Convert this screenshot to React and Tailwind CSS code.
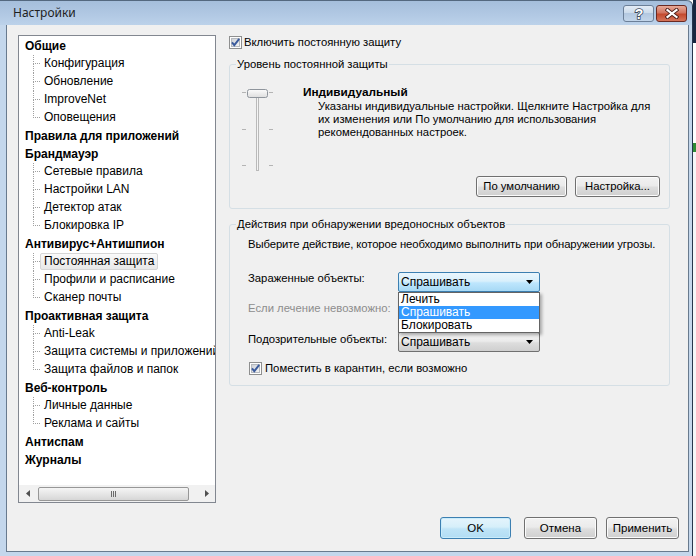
import React from "react";

const TREE = [
  { label: "Общие", children: ["Конфигурация", "Обновление", "ImproveNet", "Оповещения"] },
  { label: "Правила для приложений" },
  { label: "Брандмауэр", children: ["Сетевые правила", "Настройки LAN", "Детектор атак", "Блокировка IP"] },
  { label: "Антивирус+Антишпион", children: ["Постоянная защита", "Профили и расписание", "Сканер почты"] },
  { label: "Проактивная защита", children: ["Anti-Leak", "Защита системы и приложений", "Защита файлов и папок"] },
  { label: "Веб-контроль", children: ["Личные данные", "Реклама и сайты"] },
  { label: "Антиспам" },
  { label: "Журналы" },
];

function Checkbox() {
  return (
    <svg width="13" height="13" viewBox="0 0 13 13" className="shrink-0">
      <defs>
        <linearGradient id="cbg" x1="0" y1="0" x2="1" y2="1">
          <stop offset="0" stopColor="#cbcfd5" />
          <stop offset="1" stopColor="#f6f6f6" />
        </linearGradient>
      </defs>
      <rect x="0.5" y="0.5" width="12" height="12" fill="#fdfdfd" stroke="#8e8f8f" />
      <rect x="2.5" y="2.5" width="8" height="8" fill="url(#cbg)" stroke="#b5b9bf" />
      <path d="M3 6.3 L5.3 9.2 L10.2 2.8" fill="none" stroke="#3a5a9c" strokeWidth="1.9" />
    </svg>
  );
}

function Button({ children, className = "", primary }) {
  const look = primary
    ? "border-[#3c7fb1] bg-[linear-gradient(#e5f4fc,#d6effa_45%,#bfe4f7_55%,#b2ddf4)] shadow-[inset_0_0_0_1px_#c9ecfb]"
    : "border-[#707070] bg-[linear-gradient(#f2f2f2,#ebebeb_45%,#dddddd_55%,#cfcfcf)] shadow-[inset_0_0_0_1px_#fbfbfb]";
  return (
    <div className={`flex items-center justify-center rounded-[3px] border ${look} ${className}`}>
      {children}
    </div>
  );
}

function Combo({ active }) {
  const look = active
    ? "border-[#3c7fb1] bg-[linear-gradient(#eaf6fd,#d9f0fc_45%,#bee6fd_55%,#a7d9f5)]"
    : "border-[#707070] bg-[linear-gradient(#f2f2f2,#ebebeb_45%,#dddddd_55%,#cfcfcf)]";
  return (
    <div className={`flex h-[20px] w-[142px] items-center justify-between rounded-[2px] border pl-[2px] pr-[6px] text-[12px] ${look}`}>
      <span>Спрашивать</span>
      <svg width="7" height="4" viewBox="0 0 7 4">
        <path d="M0 0H7L3.5 4Z" fill="#000" />
      </svg>
    </div>
  );
}

function Slider() {
  return (
    <svg width="33" height="83" viewBox="0 0 33 83" className="shrink-0">
      <defs>
        <linearGradient id="thumb" x1="0" y1="0" x2="0" y2="1">
          <stop offset="0" stopColor="#fbfbfb" />
          <stop offset="1" stopColor="#dedede" />
        </linearGradient>
      </defs>
      {[4, 41, 77].map((y) => (
        <g key={y} stroke="#b4b4b4">
          <line x1="0" y1={y + 0.5} x2="4" y2={y + 0.5} />
          <line x1="27" y1={y + 0.5} x2="31" y2={y + 0.5} />
        </g>
      ))}
      <rect x="14.5" y="7.5" width="2" height="75" fill="#f4f4f4" stroke="#b9b9b9" />
      <rect x="5.5" y="1.5" width="20" height="8" rx="2" fill="url(#thumb)" stroke="#8f959c" />
    </svg>
  );
}

export default function App() {
  return (
    <div className="flex h-[556px] w-[696px] overflow-hidden bg-white font-['Liberation_Sans',Arial,sans-serif] text-[11.5px] leading-[13px] text-black">
      {/* window */}
      <div className="flex w-[693px] shrink-0 flex-col rounded-tr-[6px] border-r border-[#26364d] bg-[#c4d7ec]">
        {/* title bar */}
        <div className="flex h-[25px] shrink-0 items-start justify-between rounded-tr-[6px] border-t border-[#54687f] bg-[linear-gradient(#a5bedb,#b2c9e4_60%,#bcd2ea)] pl-[13px] pr-[5px]">
          <span className="mt-[3px] font-['Noto_Sans',sans-serif] text-[12px] leading-[17px] text-[#1e1e1e]">Настройки</span>
          <div className="mt-[4px] flex gap-[2px]">
            <div className="flex h-[17px] w-[31px] items-center justify-center rounded-[3px] border border-[#6b7f98] bg-[linear-gradient(#e3ecf6,#c9d9ea_50%,#b3c8e0_50%,#c2d5ea)]">
              <svg width="14" height="15" viewBox="0 0 14 15">
                <text x="7" y="12.5" textAnchor="middle" fontFamily="Liberation Sans, Arial, sans-serif" fontWeight="bold" fontSize="14" fill="#fff" stroke="#3d4c5f" strokeWidth="1.6" paintOrder="stroke">?</text>
              </svg>
            </div>
            <div className="flex h-[17px] w-[31px] items-center justify-center rounded-[3px] border border-[#6a2a22] bg-[linear-gradient(#e7a997,#d27560_45%,#c44a2e_55%,#d5745a)]">
              <svg width="14" height="11" viewBox="0 0 14 11">
                <path d="M2.5 2 L11.5 9 M11.5 2 L2.5 9" stroke="#4a1e18" strokeWidth="4" strokeLinecap="square" />
                <path d="M2.5 2 L11.5 9 M11.5 2 L2.5 9" stroke="#fff" strokeWidth="2.2" strokeLinecap="square" />
              </svg>
            </div>
          </div>
        </div>

        {/* frame + client area */}
        <div className="flex flex-1 pb-[4px] pl-[6px] pr-[3px]">
          <div className="flex flex-1 flex-col border-x border-b border-[#687a8e] bg-[#f0f0f0]">
            <div className="flex items-start pt-[10px]">
              {/* tree */}
              <div className="ml-[11px] flex h-[468px] w-[198px] shrink-0 flex-col border border-[#828790] bg-white text-[12px]">
                <div className="flex-1 overflow-hidden whitespace-nowrap pt-[1px]">
                  {TREE.map((g) => (
                    <div key={g.label}>
                      <div className="flex h-[18px] items-center pl-[6px] font-bold">{g.label}</div>
                      {g.children &&
                        g.children.map((c, i) => {
                          const last = i === g.children.length - 1;
                          const sel = c === "Постоянная защита";
                          return (
                            <div key={c} className="flex h-[18px]">
                              <div className="ml-[14px] flex w-[7px] shrink-0 flex-col">
                                <div className="h-[9px] border-b border-l border-dotted border-[#a0a0a0]" />
                                <div className={last ? "flex-1" : "flex-1 border-l border-dotted border-[#a0a0a0]"} />
                              </div>
                              <div
                                className={`flex h-[17px] items-center rounded-[2px] border px-[3px] ${
                                  sel
                                    ? "border-[#d6d6d6] bg-[linear-gradient(#fafafa,#e8e8e8)]"
                                    : "border-transparent"
                                }`}
                              >
                                {c}
                              </div>
                            </div>
                          );
                        })}
                    </div>
                  ))}
                </div>
                {/* horizontal scrollbar */}
                <div className="flex h-[17px] shrink-0 items-center bg-[#f1f1f1]">
                  <div className="flex w-[17px] justify-center">
                    <svg width="4" height="7" viewBox="0 0 4 7">
                      <path d="M4 0V7L0 3.5Z" fill="#505050" />
                    </svg>
                  </div>
                  <div className="ml-[2px] flex h-[14px] w-[151px] items-center justify-center gap-[1px] rounded-[2px] border border-[#979797] bg-[linear-gradient(#f5f5f5,#e6e6e6_50%,#d6d6d6)]">
                    <div className="h-[6px] w-[1px] bg-[#6b6b6b]" />
                    <div className="h-[6px] w-[1px] bg-[#6b6b6b]" />
                    <div className="h-[6px] w-[1px] bg-[#6b6b6b]" />
                  </div>
                  <div className="ml-auto flex w-[17px] justify-center">
                    <svg width="4" height="7" viewBox="0 0 4 7">
                      <path d="M0 0V7L4 3.5Z" fill="#505050" />
                    </svg>
                  </div>
                </div>
              </div>

              {/* right column */}
              <div className="ml-[13px] flex w-[441px] flex-col text-[11.3px]">
                <div className="flex h-[15px] items-center gap-[2px]">
                  <Checkbox />
                  <span>Включить постоянную защиту</span>
                </div>

                <fieldset className="mt-[8px] rounded-[3px] border border-[#d5dfe5]">
                  <legend className="ml-[6px] px-[1px]">Уровень постоянной защиты</legend>
                  <div className="flex h-[137px] flex-col">
                    <div className="flex items-start pl-[12px]">
                      <div className="mt-[17px]">
                        <Slider />
                      </div>
                      <div className="ml-[28px] mt-[15px] whitespace-nowrap">
                        <div className="text-[11.8px] font-bold">Индивидуальный</div>
                        <div className="mt-[1px] pl-[15px]">
                          Указаны индивидуальные настройки. Щелкните Настройка для
                          <br />
                          их изменения или По умолчанию для использования
                          <br />
                          рекомендованных настроек.
                        </div>
                      </div>
                    </div>
                    <div className="mt-auto flex justify-end gap-[8px] pb-[11px] pr-[9px]">
                      <Button className="h-[21px] w-[91px]">По умолчанию</Button>
                      <Button className="h-[21px] w-[85px]">Настройка...</Button>
                    </div>
                  </div>
                </fieldset>

                <fieldset className="mt-[9px] rounded-[3px] border border-[#d5dfe5]">
                  <legend className="ml-[6px] px-[1px]">Действия при обнаружении вредоносных объектов</legend>
                  <div className="flex flex-col pb-[10px] pl-[18px] pt-[7px]">
                    <div className="whitespace-nowrap tracking-[-0.1px]">Выберите действие, которое необходимо выполнить при обнаружении угрозы.</div>
                    <div className="mt-[21px] flex h-[20px] items-start">
                      <span className="w-[150px] shrink-0">Зараженные объекты:</span>
                      <div className="relative">
                        <Combo active />
                        <div className="absolute left-0 top-full z-10 w-[142px] border border-[#646464] bg-white text-[12px] shadow-[2px_2px_3px_rgba(0,0,0,0.3)]">
                          <div className="h-[13px] pl-[2px]">Лечить</div>
                          <div className="h-[13px] bg-[#3399ff] pl-[2px] text-white">Спрашивать</div>
                          <div className="h-[13px] pl-[2px]">Блокировать</div>
                        </div>
                      </div>
                    </div>
                    <div className="mt-[10px] h-[13px] text-[#8d8d8d]">Если лечение невозможно:</div>
                    <div className="mt-[17px] flex h-[20px] items-start">
                      <span className="w-[150px] shrink-0 pt-[1px]">Подозрительные объекты:</span>
                      <Combo />
                    </div>
                    <div className="mt-[10px] flex h-[13px] items-center gap-[3px] pl-[1px]">
                      <Checkbox />
                      <span>Поместить в карантин, если возможно</span>
                    </div>
                  </div>
                </fieldset>
              </div>
            </div>

            {/* dialog buttons */}
            <div className="mt-auto flex justify-end pb-[12px] pr-[9px]">
              <Button primary className="h-[22px] w-[71px]">OK</Button>
              <Button className="ml-[13px] h-[22px] w-[73px]">Отмена</Button>
              <Button className="ml-[9px] h-[22px] w-[73px]">Применить</Button>
            </div>
          </div>
        </div>
      </div>

      {/* desktop behind */}
      <div className="flex w-[3px] flex-col">
        <div className="h-[43px] bg-[#172741]" />
        <div className="h-[100px] bg-white" />
        <div className="h-[9px] bg-[#2f8b36]" />
        <div className="flex-1 bg-[#f4f6f8]" />
      </div>
    </div>
  );
}
